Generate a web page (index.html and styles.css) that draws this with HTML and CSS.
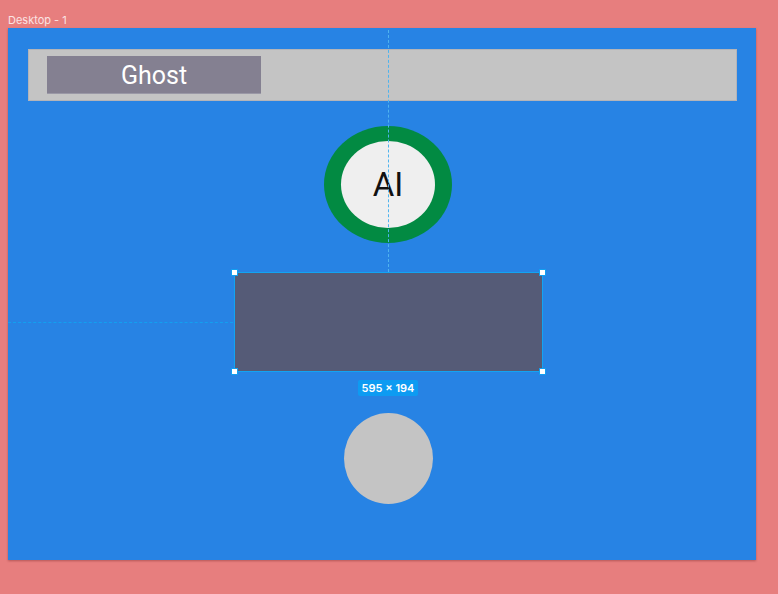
FILE: index.html
```html
<!DOCTYPE html>
<html>
<head>
<meta charset="utf-8">
<link rel="stylesheet" href="styles.css">
</head>
<body>
<div class="label">Desktop - 1</div>
<div class="frame">
  <div class="bar">
    <div class="ghost">Ghost</div>
  </div>
  <div class="stack">
    <div class="ring"><div class="inner">AI</div></div>
    <div class="rect">
      <span class="handle tl"></span><span class="handle tr"></span>
      <span class="handle bl"></span><span class="handle br"></span>
    </div>
    <div class="size">595 × 194</div>
    <div class="dot"></div>
  </div>
  <div class="vguide"></div>
  <div class="hguide"></div>
</div>
</body>
</html>
```
FILE: styles.css
```css
html, body { margin: 0; padding: 0; }
body {
  background: #e77e7e;
  width: 778px;
  height: 594px;
  overflow: hidden;
  font-family: Inter, "Noto Sans", sans-serif;
}
.label {
  font-size: 11px;
  line-height: 14px;
  color: #fbe3e3;
  padding: 13px 0 0 8px;
  height: 15px;
}
.frame {
  position: relative;
  margin-left: 8px;
  width: 748px;
  height: 532px;
  background: #2783e4;
  box-shadow: 0 1px 2px rgba(120,40,40,0.45);
  display: flex;
  flex-direction: column;
}
.bar {
  margin: 21px 0 0 20px;
  width: 689px;
  height: 44px;
  background: #c4c4c4;
  border: 1px solid #b4b4b8;
  display: flex;
  padding: 6px 0 0 18px;
}
.ghost {
  width: 214px;
  height: 38px;
  background: #848091;
  border-bottom: 1px solid #9a98a6;
  box-sizing: border-box;
  color: #fff;
  font-family: Roboto, sans-serif;
  font-size: 25px;
  line-height: 40px;
  text-align: center;
}
.stack {
  display: flex;
  flex-direction: column;
  align-items: center;
  padding-left: 12px;
}
.ring {
  margin-top: 25px;
  width: 128px;
  height: 117px;
  border-radius: 50%;
  background: #028a42;
  display: flex;
  align-items: center;
  justify-content: center;
}
.inner {
  width: 94px;
  height: 87px;
  border-radius: 50%;
  background: #efefef;
  color: #111;
  font-family: Roboto, sans-serif;
  font-size: 33px;
  line-height: 87px;
  text-align: center;
}
.rect {
  position: relative;
  margin-top: 29px;
  width: 309px;
  height: 100px;
  background: #555b77;
  border: 1px solid #12a4f2;
  box-sizing: border-box;
  z-index: 2;
}
.handle {
  position: absolute;
  width: 5px;
  height: 5px;
  background: #fff;
  border: 1px solid #129ef0;
}
.tl { left: -4px; top: -4px; }
.tr { right: -4px; top: -4px; }
.bl { left: -4px; bottom: -4px; }
.br { right: -4px; bottom: -4px; }
.size {
  margin-top: 8px;
  background: #0d9bf2;
  color: #fff;
  font-size: 11px;
  font-weight: 600;
  line-height: 16px;
  padding: 0 4px;
  border-radius: 2px;
}
.dot {
  margin-top: 17px;
  width: 89px;
  height: 91px;
  border-radius: 50%;
  background: #c4c4c4;
}
.vguide {
  position: absolute;
  left: 380px;
  top: 2px;
  height: 242px;
  border-left: 1px dashed #4fb3ee;
}
.hguide {
  position: absolute;
  left: 0;
  top: 294px;
  width: 225px;
  border-top: 1px dashed #12a0f0;
}
```
